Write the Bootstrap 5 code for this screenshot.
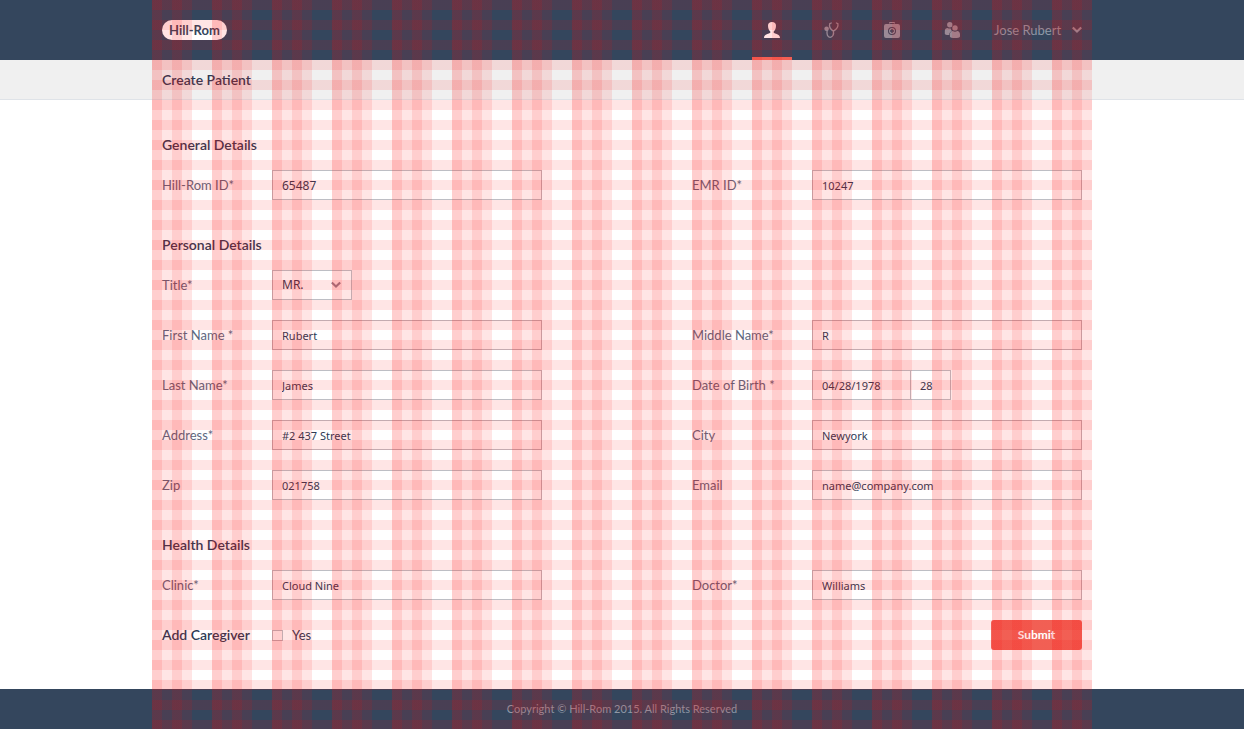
<!DOCTYPE html>
<html lang="en">
<head>
<meta charset="utf-8">
<meta name="viewport" content="width=device-width, initial-scale=1">
<title>Create Patient - Hill-Rom</title>
<link href="https://cdn.jsdelivr.net/npm/bootstrap@5.3.0/dist/css/bootstrap.min.css" rel="stylesheet">
<style>
  :root { --navy: #34465d; --coral: #f06a5d; --ink: #2c3b55; --soft: #5d6880; }
  body { font-family: Lato, "Noto Sans", sans-serif; font-size: 13px; line-height: 20px; color: var(--ink); background: #fff; }
  .wrap { width: 100%; max-width: 940px; margin: 0 auto; padding: 0 10px; }
  .topbar, .site-footer { background: var(--navy); }
  .topbar .wrap { min-height: 60px; }
  .brand { background: #fff; color: var(--navy); border-radius: 10px; height: 20px; width: 65px; font-size: 13px; text-align: center; font-weight: 700; text-decoration: none; }
  .topnav { gap: 20px; }
  .topnav a { width: 40px; height: 60px; color: #8f99a7; border-bottom: 3px solid transparent; padding-top: 3px; }
  .topnav a.active { color: #fff; border-color: var(--coral); }
  .user-btn { color: #8f99a7; background: none; border: 0; padding: 0; margin-left: 22px; min-width: 88px; }
  .titlebar { background: #f0f0f0; border-bottom: 1px solid #dfe3e8; }
  .titlebar .wrap { height: 39px; }
  h1, h2, .strong-label { font-size: 14px; line-height: 30px; font-weight: 600; margin: 0; }
  h2 { padding: 10px 0; }
  .patient-form { padding-top: 20px; padding-bottom: 19px; }
  .form-line { display: grid; grid-template-columns: 110px minmax(0, 1fr) 150px 120px minmax(0, 1fr); align-items: center; min-height: 30px; margin-bottom: 20px; }
  .form-line > .second { grid-column: 4; }
  .form-line label { color: var(--soft); }
  .form-control, .form-select { height: 30px; border: 1px solid #bdbec4; border-radius: 0; background-color: transparent; color: var(--ink); padding: 0 9px; font-family: "Noto Sans", sans-serif; font-size: 11px; line-height: 28px; }
  .form-control.larger, .form-select { font-size: 12px; }
  .select-box { width: 80px; position: relative; }
  .form-select { background-image: none; }
  .select-box svg { position: absolute; right: 11px; top: 11px; pointer-events: none; }
  .dob { width: 99px; }
  .age { width: 41px; margin-left: -1px; }
  .form-check-input.tick { width: 11px; height: 11px; margin: 0 9px 0 0; border: 1px solid #bdbec4; border-radius: 0; background-color: transparent; }
  .form-line label.yes { color: var(--ink); }
  .submit { width: 91px; height: 30px; padding: 0; border: 0; border-radius: 3px; background: var(--coral); color: #fff; font-size: 12px; font-weight: 700; }
  .submit:hover { background: #e05a4d; color: #fff; }
  .site-footer { color: #8f99a7; font-size: 11px; line-height: 40px; }
  /* Column and baseline guides laid over the page */
  .guides { position: absolute; inset: 0; margin: 0 auto; max-width: 940px; pointer-events: none; z-index: 10;
    background:
      repeating-linear-gradient(180deg, rgba(255,0,0,.1) 0 10px, transparent 10px 20px),
      repeating-linear-gradient(90deg, rgba(255,0,0,.1) 0 40px, transparent 40px 60px),
      repeating-linear-gradient(90deg, rgba(255,0,0,.1) 0 10px, transparent 10px 20px, rgba(255,0,0,.1) 20px 30px, transparent 30px 60px); }
  @media (max-width: 767px) {
    .form-line { grid-template-columns: 110px minmax(0, 1fr); row-gap: 20px; }
    .form-line > .second { grid-column: 1; }
  }
</style>
</head>
<body>
<div class="position-relative d-flex flex-column min-vh-100">
  <header class="topbar">
    <div class="wrap d-flex align-items-center">
      <a class="brand" href="#">Hill-Rom</a>
      <nav class="topnav d-flex ms-auto" aria-label="Main">
        <a class="active d-flex align-items-center justify-content-center" href="#" aria-label="Patients">
          <svg width="16" height="16" viewBox="0 0 16 16" fill="currentColor"><path d="M8 0C5.500 0 4 1.300 4 3.700c0 2.500.900 4.800 2.300 5.800v1.300C5.500 11.800 0 12 0 16h16c0-4-5.500-4.200-6.300-5.200V9.500C11.100 8.500 12 6.200 12 3.700 12 1.300 10.500 0 8 0z"/></svg>
        </a>
        <a class="d-flex align-items-center justify-content-center" href="#" aria-label="Clinicians">
          <svg width="16" height="16" viewBox="0 0 16 16" fill="none" stroke="currentColor" stroke-width="1.300" stroke-linecap="round"><path d="M7.300 1 5.800 1.600c-.9 2.600.5 5.600 3.600 7.500 3-1.700 5-4.700 4.500-7.500L12.400 1M9.400 9.100c.8 3.600-.9 6.200-3.300 6.200-2.600 0-3.600-3-2.900-7.300"/><circle cx="2.600" cy="6.800" r="2.300" fill="currentColor" stroke="none"/></svg>
        </a>
        <a class="d-flex align-items-center justify-content-center" href="#" aria-label="Care">
          <svg width="16" height="16" viewBox="0 0 16 16" fill="currentColor"><path d="M5 1.600V1.200C5 .5 5.500 0 6.200 0h3.600c.7 0 1.200.5 1.200 1.200v.4H9.800v-.5H6.200v.5z"/><path fill-rule="evenodd" d="M2 2h12a2 2 0 0 1 2 2v10a2 2 0 0 1-2 2H2a2 2 0 0 1-2-2V4a2 2 0 0 1 2-2zM8 5a4 4 0 1 0 0 8 4 4 0 0 0 0-8zm0 1a3 3 0 1 1 0 6 3 3 0 0 1 0-6zM7.300 7v1.300H6v1.400h1.300V11h1.400V9.700H10V8.300H8.700V7z"/></svg>
        </a>
        <a class="d-flex align-items-center justify-content-center" href="#" aria-label="Groups">
          <svg width="16" height="16" viewBox="0 0 16 16" fill="currentColor"><circle cx="5.800" cy="2.700" r="2.700"/><path d="M.8 9C.8 7 2 6.100 3.600 6c.8.600 2 .8 3.200.4.100 1.200.5 2 1.200 2.700-1.800.7-2.700 2-2.700 3.900-2.500.1-4.500-.3-4.500-1.300z"/><circle cx="11" cy="5.900" r="2.700"/><path d="M5.900 12.300c0-1.900 1.200-3.100 2.800-3.200 1.400 1 3.200 1 4.600 0 1.500.1 2.700 1.300 2.700 3.200v2.200c0 2-10.100 2-10.100 0z"/></svg>
        </a>
      </nav>
      <button class="user-btn d-flex align-items-center justify-content-between" type="button">Jose Rubert
        <svg width="10" height="8" viewBox="0 0 10 8" fill="none" stroke="currentColor" stroke-width="2.200"><path d="m.8 1.500 4.200 4 4.200-4"/></svg>
      </button>
    </div>
  </header>
  <div class="titlebar"><div class="wrap d-flex align-items-center"><h1>Create Patient</h1></div></div>

  <main class="flex-grow-1">
    <form class="wrap patient-form">
      <h2>General Details</h2>
      <div class="form-line">
        <label for="hrid">Hill-Rom ID*</label><input id="hrid" class="form-control larger" value="65487">
        <label class="second" for="emr">EMR ID*</label><input id="emr" class="form-control" value="10247">
      </div>

      <h2>Personal Details</h2>
      <div class="form-line">
        <label for="title">Title*</label>
        <div class="select-box">
          <select id="title" class="form-select"><option>MR.</option><option>MRS.</option></select>
          <svg width="10" height="8" viewBox="0 0 10 8" fill="none" stroke="#8f8c9c" stroke-width="2.200"><path d="m.8 1.500 4.200 4 4.200-4"/></svg>
        </div>
      </div>
      <div class="form-line">
        <label for="first">First Name *</label><input id="first" class="form-control" value="Rubert">
        <label class="second" for="middle">Middle Name*</label><input id="middle" class="form-control" value="R">
      </div>
      <div class="form-line">
        <label for="last">Last Name*</label><input id="last" class="form-control" value="James">
        <label class="second" for="dob">Date of Birth *</label>
        <div class="d-flex"><input id="dob" class="form-control dob" value="04/28/1978"><input class="form-control age" aria-label="Age" value="28"></div>
      </div>
      <div class="form-line">
        <label for="address">Address*</label><input id="address" class="form-control" value="#2 437 Street">
        <label class="second" for="city">City</label><input id="city" class="form-control" value="Newyork">
      </div>
      <div class="form-line">
        <label for="zip">Zip</label><input id="zip" class="form-control" value="021758">
        <label class="second" for="email">Email</label><input id="email" class="form-control" type="email" value="name@company.com">
      </div>

      <h2>Health Details</h2>
      <div class="form-line">
        <label for="clinic">Clinic*</label><input id="clinic" class="form-control" value="Cloud Nine">
        <label class="second" for="doctor">Doctor*</label><input id="doctor" class="form-control" value="Williams">
      </div>
      <div class="form-line mb-0">
        <span class="strong-label">Add Caregiver</span>
        <div class="d-flex align-items-center"><input id="caregiver" type="checkbox" class="form-check-input tick"><label class="yes" for="caregiver">Yes</label></div>
        <span class="second"></span>
        <button class="submit btn ms-auto" type="submit">Submit</button>
      </div>
    </form>
  </main>

  <footer class="site-footer text-center"><div class="wrap">Copyright © Hill-Rom 2015. All Rights Reserved</div></footer>
  <div class="guides" aria-hidden="true"></div>
</div>
<script src="https://cdn.jsdelivr.net/npm/bootstrap@5.3.0/dist/js/bootstrap.bundle.min.js"></script>
</body>
</html>
